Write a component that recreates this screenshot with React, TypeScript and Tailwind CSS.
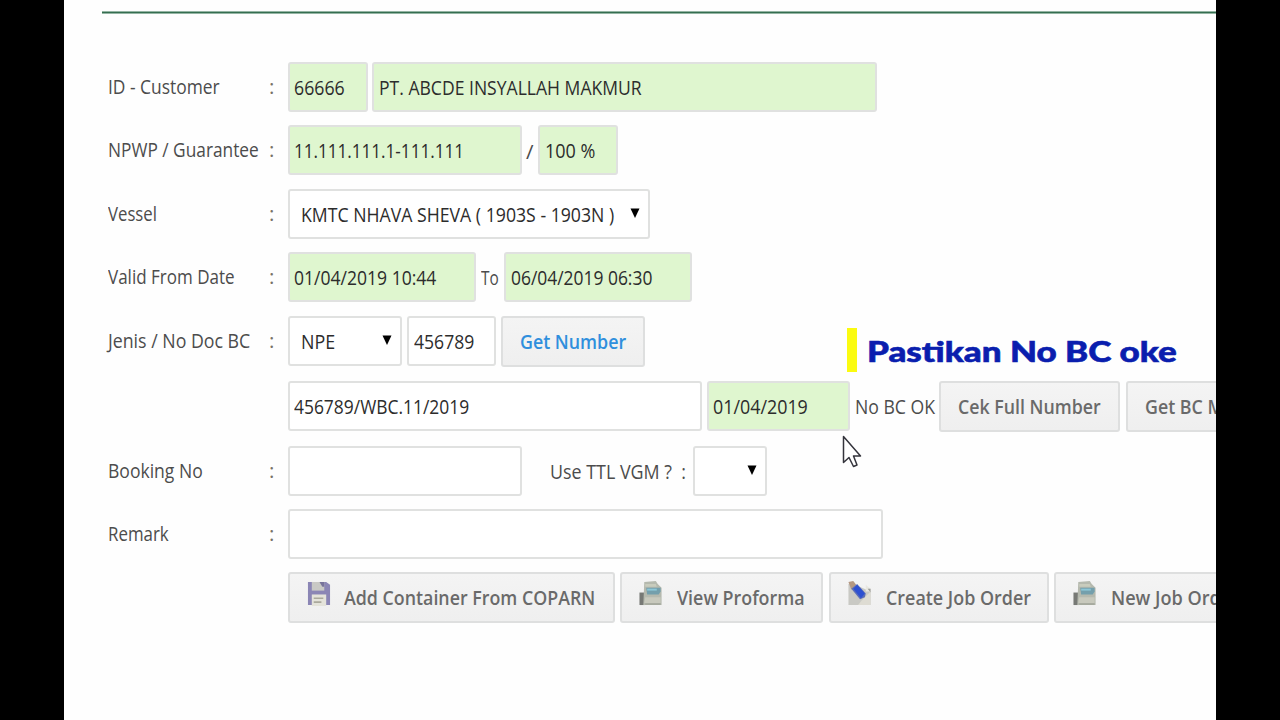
import { useLayoutEffect, useRef, type ReactNode } from "react";
import { clsx } from "clsx";

interface FitTextProps {
  children: string;
  width: number;
  className?: string;
}

// Condenses a line of text horizontally so that it takes up the given width
function FitText({ children, width, className }: FitTextProps) {
  const ref = useRef<HTMLSpanElement>(null);

  useLayoutEffect(() => {
    const el = ref.current;
    if (!el) return;
    el.style.transform = `scaleX(${width / el.offsetWidth})`;
  }, [width, children]);

  return (
    <span className={clsx("block shrink-0 text-left", className)} style={{ width }}>
      <span ref={ref} className="inline-block origin-left whitespace-pre">
        {children}
      </span>
    </span>
  );
}

interface FieldProps {
  className: string;
  text?: string;
  textWidth?: number;
  readOnly?: boolean;
}

function Field({ className, text, textWidth = 0, readOnly }: FieldProps) {
  return (
    <div
      className={clsx(
        "h-[50px] shrink-0 rounded-[3px] border-2 border-[#e0e1e0] pl-[4px] leading-[46px] text-[#2c2c2c]",
        readOnly ? "bg-[#dff6cf]" : "bg-white",
        className,
      )}
    >
      {text && <FitText width={textWidth}>{text}</FitText>}
    </div>
  );
}

function Select({ className, text, textWidth = 0 }: FieldProps) {
  return (
    <div
      className={clsx(
        "flex h-[50px] shrink-0 justify-between rounded-[3px] border-2 border-[#e0e1e0] bg-white pl-[11px] leading-[46px] text-[#2c2c2c]",
        className,
      )}
    >
      {text ? <FitText width={textWidth}>{text}</FitText> : <span />}
      <svg className="mt-[17px] mr-[8px] h-[11px] w-[10px]" viewBox="0 0 10 11">
        <path d="M0.5 0.5H9.500L5 10Z" fill="#000" />
      </svg>
    </div>
  );
}

interface ButtonProps {
  className: string;
  text: string;
  textWidth: number;
  icon?: ReactNode;
}

function Button({ className, text, textWidth, icon }: ButtonProps) {
  return (
    <button
      className={clsx(
        "flex h-[51px] shrink-0 rounded-[3px] border-2 border-[#dedfdf] bg-linear-to-b from-[#f4f4f4] to-[#efefef] pl-[17px] leading-[47px] font-semibold",
        className,
      )}
    >
      {icon}
      <FitText width={textWidth}>{text}</FitText>
    </button>
  );
}

interface RowProps {
  label?: string;
  labelWidth?: number;
  className: string;
  children: ReactNode;
}

function Row({ label, labelWidth = 0, className, children }: RowProps) {
  return (
    <div className={clsx("flex shrink-0 items-start", className)}>
      <div className="flex w-[180px] shrink-0 leading-[49px]">
        {label && (
          <>
            <div className="w-[161px]">
              <FitText width={labelWidth}>{label}</FitText>
            </div>
            <span className="text-[#777166]">:</span>
          </>
        )}
      </div>
      {children}
    </div>
  );
}

function SaveIcon() {
  return (
    <svg className="mt-[7px] mr-[13px] h-[25px] w-[24px] shrink-0" viewBox="0 0 25 26">
      <path d="M1 1H20L24 4V25H1Z" fill="#8b86b5" />
      <path d="M5 1H18V10H5Z" fill="#c9c9c5" />
      <path d="M13 1H18V6H16Z" fill="#77739a" />
      <path d="M5 14H20V26H5Z" fill="#e4e3da" />
      <path d="M7 18H17M7 22H15" stroke="#aaa99c" strokeWidth="1.6" />
    </svg>
  );
}

function PrinterIcon() {
  return (
    <svg className="mt-[7px] mr-[14px] h-[25px] w-[24px] shrink-0" viewBox="0 0 24 26">
      <path d="M0 12H6V25H0Z" fill="#777975" />
      <path d="M5 1L17 0L19 3L23 7V25H4Z" fill="#b5b9ae" />
      <path d="M6 3H17L18 6H6Z" fill="#c9ccbd" />
      <path d="M7 7H22V11L20 14H8Z" fill="#749fac" />
      <path d="M8 8H18V10H8Z" fill="#8cc6d6" />
      <path d="M6 17H22V23H5Z" fill="#c8c9bd" />
      <path d="M6 24H22" stroke="#a2a69a" strokeWidth="1.500" />
    </svg>
  );
}

function PencilIcon() {
  return (
    <svg className="mt-[7px] mr-[14px] h-[25px] w-[24px] shrink-0" viewBox="0 0 24 26">
      <path d="M0 3H5L23 11V25H0Z" fill="#c9c9c4" />
      <path d="M14 20L23 11V25H10Z" fill="#dedcd3" />
      <path d="M18 4L23 8V11H18Z" fill="#e9e8e1" />
      <path d="M20 8H23V12Z" fill="#9c9d99" />
      <path d="M0 1L5 0L8 4L3 9Z" fill="#b49882" />
      <path d="M3 8L9 3L18 13L17 17L12 19Z" fill="#5a6db8" />
      <path d="M5 8L9 4L17 13L13 18Z" fill="#2d50d1" />
    </svg>
  );
}

export default function App() {
  return (
    <div className="h-[720px] w-[1280px] overflow-hidden bg-black px-[64px]">
      <div className="relative h-full overflow-hidden bg-[#fefefe] pt-[11px] pl-[38px] font-['Open_Sans',sans-serif] text-[20.5px] text-[#4c4c4c]">
        <div className="h-[3px] border-y border-t-[#94b5a3] border-b-[#94b5a3] bg-[#356e50]" />

        <div className="flex flex-col pt-[48px] pl-[6px]">
          <Row label="ID - Customer" labelWidth={112} className="h-[63px]">
            <Field readOnly className="mr-[4px] w-[80px]" text="66666" textWidth={51} />
            <Field readOnly className="w-[505px] pl-[5px]" text="PT. ABCDE INSYALLAH MAKMUR" textWidth={263} />
          </Row>

          <Row label="NPWP / Guarantee" labelWidth={151} className="h-[64px]">
            <Field readOnly className="w-[234px]" text="11.111.111.1-111.111" textWidth={170} />
            <FitText width={8} className="mx-[4px] leading-[52px]">/</FitText>
            <Field readOnly className="w-[80px] pl-[5px]" text="100 %" textWidth={50} />
          </Row>

          <Row label="Vessel" labelWidth={49} className="h-[63px]">
            <Select className="w-[362px]" text="KMTC NHAVA SHEVA ( 1903S - 1903N )" textWidth={313} />
          </Row>

          <Row label="Valid From Date" labelWidth={127} className="h-[64px]">
            <Field readOnly className="w-[188px]" text="01/04/2019 10:44" textWidth={142} />
            <FitText width={18} className="mr-[5px] ml-[5px] leading-[51px]">To</FitText>
            <Field readOnly className="w-[188px] pl-[5px]" text="06/04/2019 06:30" textWidth={141} />
          </Row>

          <Row label="Jenis / No Doc BC" labelWidth={142} className="h-[65px]">
            <Select className="mr-[5px] w-[114px]" text="NPE" textWidth={34} />
            <Field className="mr-[5px] w-[89px] pl-[5px]" text="456789" textWidth={60} />
            <Button className="w-[144px] text-[#2f8fdd]" text="Get Number" textWidth={106} />
          </Row>

          <Row className="h-[65px]">
            <Field className="mr-[5px] w-[414px]" text="456789/WBC.11/2019" textWidth={175} />
            <Field readOnly className="mr-[5px] w-[143px]" text="01/04/2019" textWidth={95} />
            <FitText width={80} className="mr-[4px] leading-[50px]">No BC OK</FitText>
            <Button className="mr-[6px] w-[181px] text-[#6a6a6a]" text="Cek Full Number" textWidth={143} />
            <Button className="w-[160px] text-[#6a6a6a]" text="Get BC M" textWidth={79} />
          </Row>

          <Row label="Booking No" labelWidth={95} className="h-[63px]">
            <Field className="mr-[28px] w-[234px]" />
            <FitText width={136} className="mr-[7px] leading-[51px]">Use TTL VGM ?  :</FitText>
            <Select className="w-[74px]" />
          </Row>

          <Row label="Remark" labelWidth={61} className="h-[63px]">
            <Field className="w-[595px]" />
          </Row>

          <Row className="h-[52px]">
            <Button
              className="mr-[5px] w-[327px] text-[#6a6a6a]"
              icon={<SaveIcon />}
              text="Add Container From COPARN"
              textWidth={251}
            />
            <Button
              className="mr-[6px] w-[203px] text-[#6a6a6a]"
              icon={<PrinterIcon />}
              text="View Proforma"
              textWidth={128}
            />
            <Button
              className="mr-[5px] w-[220px] text-[#6a6a6a]"
              icon={<PencilIcon />}
              text="Create Job Order"
              textWidth={145}
            />
            <Button
              className="w-[220px] text-[#6a6a6a]"
              icon={<PrinterIcon />}
              text="New Job Order"
              textWidth={128}
            />
          </Row>
        </div>

        {/* Caption laid over the form */}
        <div className="absolute top-[328px] left-[783px] flex h-[44px] items-center border-l-[10px] border-[#fbfb10] pt-[2px] pl-[10px] font-['Lato',sans-serif] text-[28px] font-black text-[#0a1eae] [stroke-linejoin:round] [-webkit-text-stroke:0.6px_#0a1eae]">
          <FitText width={310}>Pastikan No BC oke</FitText>
        </div>

        {/* Mouse pointer */}
        <svg className="absolute top-[435px] left-[778px] h-[34px] w-[20px]" viewBox="0 0 20 34">
          <path
            d="M1.500 1.500V27.500L7 22.500L11.500 31.500L15 30L11.500 21H18.500Z"
            fill="#fff"
            stroke="#34343c"
            strokeWidth="1.500"
            strokeLinejoin="round"
          />
        </svg>
      </div>
    </div>
  );
}
